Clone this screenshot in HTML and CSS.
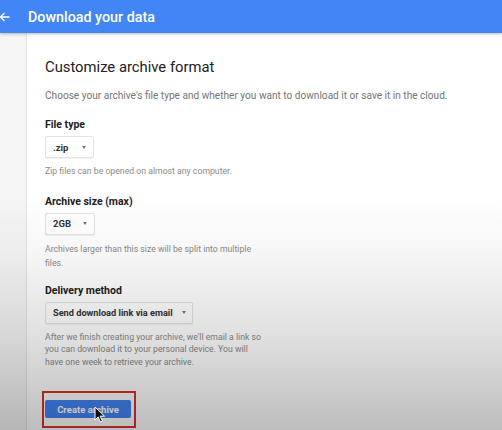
FILE: index.html
```html
<!DOCTYPE html>
<html>
<head>
<meta charset="utf-8">
<link rel="stylesheet" href="styles.css">
</head>
<body>
<div class="page">
  <header class="header">
    <span class="back">
      <svg width="11" height="10" viewBox="0 0 11 10"><path d="M10.5 5H1.5M5.5 1L1.5 5l4 4" fill="none" stroke="#fff" stroke-width="1.3"/></svg>
    </span>
    <h1 class="title">Download your data</h1>
  </header>
  <div class="main">
    <div class="rail"></div>
    <section class="card">
      <h2 class="heading">Customize archive format</h2>
      <p class="lead">Choose your archive's file type and whether you want to download it or save it in the cloud.</p>

      <div class="field">
        <div class="label">File type</div>
        <div class="select sel-zip"><span>.zip</span><span class="caret"></span></div>
        <p class="help">Zip files can be opened on almost any computer.</p>
      </div>

      <div class="field field-2">
        <div class="label">Archive size (max)</div>
        <div class="select sel-size"><span>2GB</span><span class="caret"></span></div>
        <p class="help help-2">Archives larger than this size will be split into multiple<br>files.</p>
      </div>

      <div class="field field-3">
        <div class="label">Delivery method</div>
        <div class="select sel-delivery"><span>Send download link via email</span><span class="caret"></span></div>
        <p class="help">After we finish creating your archive, we'll email a link so<br>you can download it to your personal device. You will<br>have one week to retrieve your archive.</p>
      </div>

      <div class="highlight">
        <button class="primary">Create archive</button>
      </div>
    </section>
  </div>
  <svg class="cursor" width="12" height="17" viewBox="0 0 12 17"><path d="M1 1v13l3.2-3 2.2 5 2-0.9-2.2-4.9H10.5z" fill="#111" stroke="#fff" stroke-width="1"/></svg>
  <div class="vignette"></div>
</div>
</body>
</html>
```
FILE: styles.css
```css
html, body {
  margin: 0;
  padding: 0;
}
body {
  width: 502px;
  height: 430px;
  overflow: hidden;
  font-family: Roboto, "Liberation Sans", Arial, sans-serif;
  background: #fff;
}
.page {
  position: relative;
  width: 502px;
  height: 430px;
  overflow: hidden;
}
.header {
  height: 33px;
  background: #4285f4;
  display: flex;
  align-items: center;
  position: relative;
  z-index: 1;
  box-shadow: 0 1px 3px rgba(0, 0, 0, 0.28);
}
.back {
  width: 28px;
  display: flex;
  align-items: center;
  padding-top: 1px;
}
.back svg {
  margin-left: -1px;
}
.title {
  margin: 0;
  font-size: 14.3px;
  font-weight: 500;
  color: #fff;
  line-height: 20px;
}
.main {
  display: flex;
  height: 397px;
}
.rail {
  width: 26px;
  background: #f5f5f5;
  border-right: 1px solid #e2e2e2;
  flex: none;
}
.card {
  flex: 1;
  padding: 24px 0 0 18px;
  color: #212121;
}
.heading {
  margin: 0;
  font-size: 14.8px;
  font-weight: 400;
  line-height: 20px;
  color: #212121;
}
.lead {
  margin: 12px 0 0;
  font-size: 10.1px;
  line-height: 14px;
  color: #757575;
}
.field {
  margin-top: 15px;
}
.field-2 {
  margin-top: 17px;
}
.field-3 {
  margin-top: 14px;
}
.label {
  font-size: 10.5px;
  font-weight: 700;
  line-height: 14px;
  color: #212121;
}
.select {
  margin-top: 4px;
  height: 22px;
  box-sizing: border-box;
  border: 1px solid #e3e3e3;
  box-shadow: 0 1px 1px rgba(0, 0, 0, 0.06);
  border-radius: 2px;
  display: inline-flex;
  align-items: center;
  justify-content: space-between;
  padding: 0 7px 0 7px;
  font-size: 9.5px;
  font-weight: 700;
  color: #333;
  background: #fff;
}
.sel-zip { width: 49px; }
.sel-size { width: 50px; }
.sel-delivery { width: 148px; padding-left: 7px; padding-right: 6px; font-size: 9.2px; }
.caret {
  width: 0;
  height: 0;
  border-left: 2.5px solid transparent;
  border-right: 2.5px solid transparent;
  border-top: 3px solid #777;
}
.help {
  margin: 7px 0 0;
  font-size: 8.7px;
  line-height: 12.5px;
  color: #8a8a8a;
}
.help-2 {
  line-height: 14px;
}
.highlight {
  margin: 23px 0 0 -3px;
  display: inline-block;
  border: 2px solid #d9302f;
  padding: 7px 3px 8px 1px;
}
.primary {
  display: block;
  width: 86px;
  height: 18px;
  border: 0;
  border-radius: 2px;
  background: #4285f4;
  color: #fff;
  font-family: Roboto, "Liberation Sans", Arial, sans-serif;
  font-size: 9.5px;
  font-weight: 700;
  padding: 0;
}
.cursor {
  position: absolute;
  left: 94px;
  top: 406px;
  z-index: 3;
}
.vignette {
  position: absolute;
  inset: 0;
  z-index: 2;
  pointer-events: none;
  background: linear-gradient(to bottom,
    rgba(0,0,0,0) 0%,
    rgba(0,0,0,0) 45%,
    rgba(0,0,0,0.03) 58%,
    rgba(0,0,0,0.07) 67%,
    rgba(0,0,0,0.12) 78%,
    rgba(0,0,0,0.19) 89%,
    rgba(0,0,0,0.26) 100%);
}
```
